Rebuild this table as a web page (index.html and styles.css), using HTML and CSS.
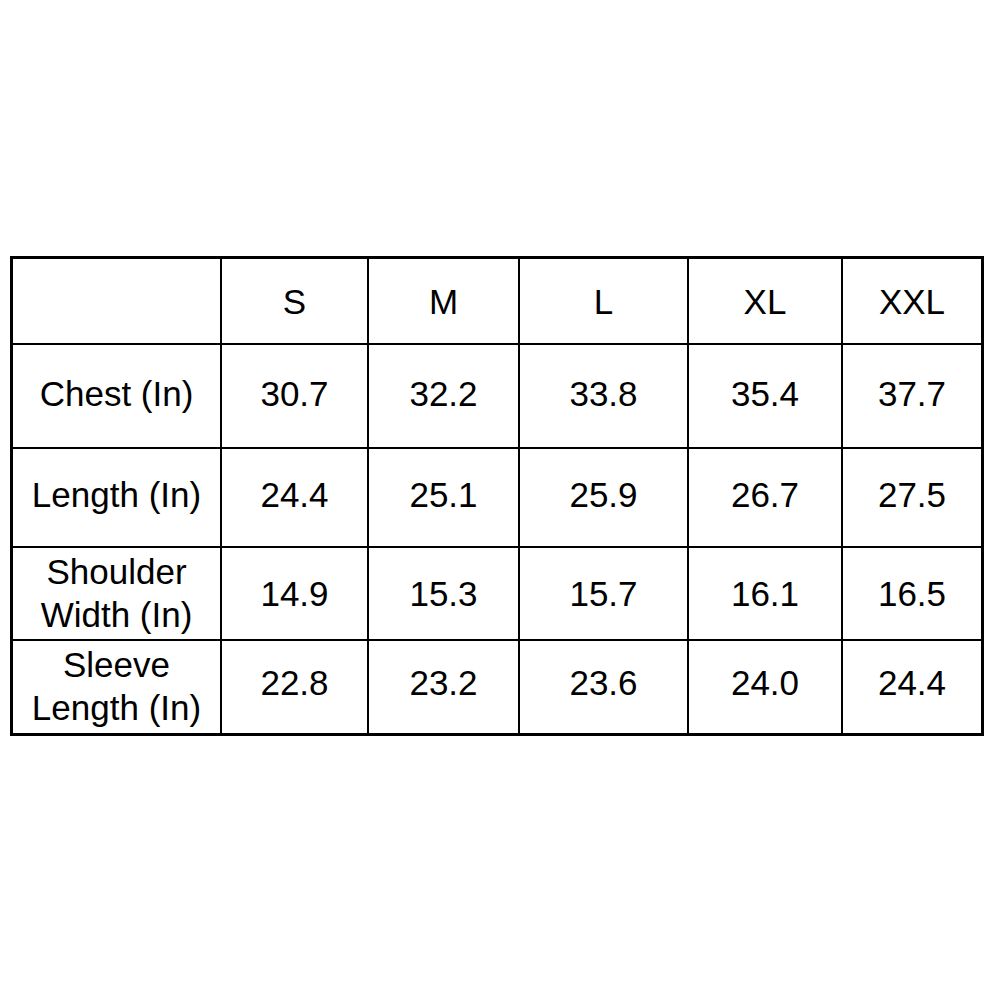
FILE: index.html
```html
<!DOCTYPE html>
<html>
<head>
<meta charset="utf-8">
<link rel="stylesheet" href="styles.css">
</head>
<body>
<div class="chart">
  <div class="cell"></div>
  <div class="cell">S</div>
  <div class="cell">M</div>
  <div class="cell">L</div>
  <div class="cell">XL</div>
  <div class="cell">XXL</div>

  <div class="cell up">Chest (In)</div>
  <div class="cell up">30.7</div>
  <div class="cell up">32.2</div>
  <div class="cell up">33.8</div>
  <div class="cell up">35.4</div>
  <div class="cell up">37.7</div>

  <div class="cell up">Length (In)</div>
  <div class="cell up">24.4</div>
  <div class="cell up">25.1</div>
  <div class="cell up">25.9</div>
  <div class="cell up">26.7</div>
  <div class="cell up">27.5</div>

  <div class="cell two">Shoulder<br>Width (In)</div>
  <div class="cell">14.9</div>
  <div class="cell">15.3</div>
  <div class="cell">15.7</div>
  <div class="cell">16.1</div>
  <div class="cell">16.5</div>

  <div class="cell two">Sleeve<br>Length (In)</div>
  <div class="cell up2">22.8</div>
  <div class="cell up2">23.2</div>
  <div class="cell up2">23.6</div>
  <div class="cell up2">24.0</div>
  <div class="cell up2">24.4</div>
</div>
</body>
</html>
```
FILE: styles.css
```css
html, body {
  margin: 0;
  padding: 0;
  background: #fff;
}
body {
  padding: 256px 0 0 10px;
  font-family: "Liberation Sans", Arial, sans-serif;
  color: #000;
}
.chart {
  width: 974px;
  box-sizing: border-box;
  border: 3px solid #000;
  background: #000;
  display: grid;
  grid-template-columns: 207px 145px 149px 167px 152px 138px;
  grid-template-rows: 84px 102px 97px 91px 92px;
  gap: 2px;
}
.cell {
  background: #fff;
  display: flex;
  align-items: center;
  justify-content: center;
  text-align: center;
  font-size: 35px;
  line-height: 1;
}
.cell.up {
  padding-bottom: 6px;
}
.cell.up2 {
  padding-bottom: 10px;
}
.cell.two {
  line-height: 43px;
  padding-bottom: 2px;
}
```
